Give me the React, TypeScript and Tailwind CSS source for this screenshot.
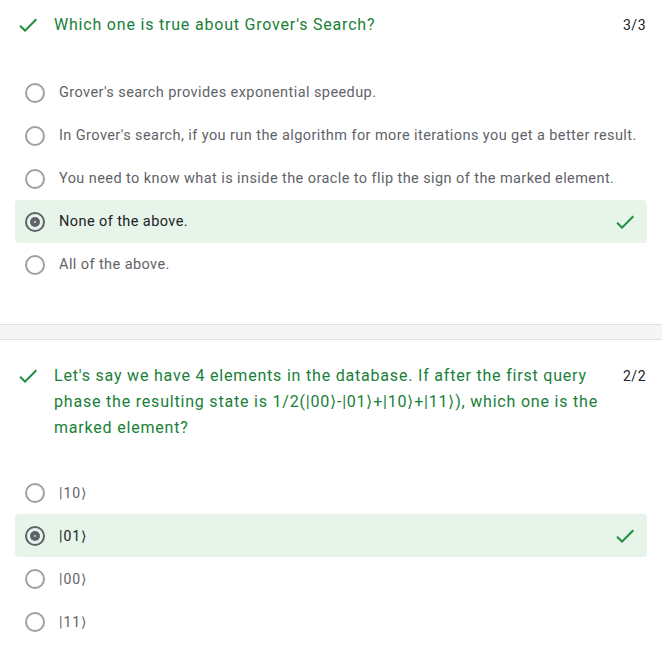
import React from "react";

type Option = { label: string; selected?: boolean };

const q1: Option[] = [
  { label: "Grover's search provides exponential speedup." },
  { label: "In Grover's search, if you run the algorithm for more iterations you get a better result." },
  { label: "You need to know what is inside the oracle to flip the sign of the marked element." },
  { label: "None of the above.", selected: true },
  { label: "All of the above." },
];

const q2: Option[] = [
  { label: "|10⟩" },
  { label: "|01⟩", selected: true },
  { label: "|00⟩" },
  { label: "|11⟩" },
];

function Check() {
  return (
    <svg width="24" height="24" viewBox="0 0 24 24" className="shrink-0 fill-[#1e8e3e]">
      <path d="M9 16.17L4.83 12l-1.42 1.41L9 19 21 7l-1.41-1.41z" />
    </svg>
  );
}

function Radio({ on }: { on?: boolean }) {
  if (on) {
    return (
      <div className="flex h-5 w-5 shrink-0 items-center justify-center rounded-full border-2 border-[#5f6368]">
        <div className="flex h-[10px] w-[10px] items-center justify-center rounded-full bg-[#5f6368]">
          <div className="h-[2px] w-[2px] rounded-full bg-[#dadce0]" />
        </div>
      </div>
    );
  }
  return <div className="h-5 w-5 shrink-0 rounded-full border-2 border-[#9aa0a6]" />;
}

function Options({ items, small }: { items: Option[]; small?: boolean }) {
  return (
    <div className="mx-[15px] flex flex-col">
      {items.map((o) => (
        <div
          key={o.label}
          className={
            "flex h-[43px] items-center gap-[14px] rounded pl-[10px] pr-[10px] " +
            (o.selected ? "bg-[#e6f4ea] text-[#202124]" : "text-[#5f6368]")
          }
        >
          <Radio on={o.selected} />
          <span
            className={
              small
                ? "flex-1 whitespace-nowrap text-sm tracking-[1px]"
                : "flex-1 whitespace-nowrap text-[14.5px] tracking-[0.42px]"
            }
          >
            {o.label}
          </span>
          {o.selected && <Check />}
        </div>
      ))}
    </div>
  );
}

export default function App() {
  return (
    <div className="w-[662px] bg-white font-['Roboto',sans-serif]">
      {/* question 1 */}
      <section className="pt-[13px] pb-[38px]">
        <header className="flex items-start gap-[14px] px-4">
          <Check />
          <div className="flex flex-1 items-start gap-6">
            <h2 className="flex-1 text-base leading-6 tracking-[0.8px] text-[#188038]">
              Which one is true about Grover's Search?
            </h2>
            <span className="text-sm leading-6 tracking-[0.5px] text-[#202124]">3/3</span>
          </div>
        </header>
        <div className="mt-[34px]">
          <Options items={q1} />
        </div>
      </section>

      <div className="h-4 border-y border-[#e0e0e0] bg-[#f5f5f5]" />

      {/* question 2 */}
      <section className="pt-[23px] pb-7">
        <header className="flex items-start gap-[14px] px-4">
          <div className="pt-px">
            <Check />
          </div>
          <div className="flex flex-1 items-start gap-6">
            <h2 className="flex-1 text-base leading-[26px] tracking-[0.8px] text-[#188038]">
              Let's say we have 4 elements in the database. If after the first query phase the resulting state is
              1/2(|00⟩-|01⟩+|10⟩+|11⟩), which one is the marked element?
            </h2>
            <span className="text-sm leading-[26px] tracking-[0.5px] text-[#202124]">2/2</span>
          </div>
        </header>
        <div className="mt-[30px]">
          <Options items={q2} small />
        </div>
      </section>
    </div>
  );
}
